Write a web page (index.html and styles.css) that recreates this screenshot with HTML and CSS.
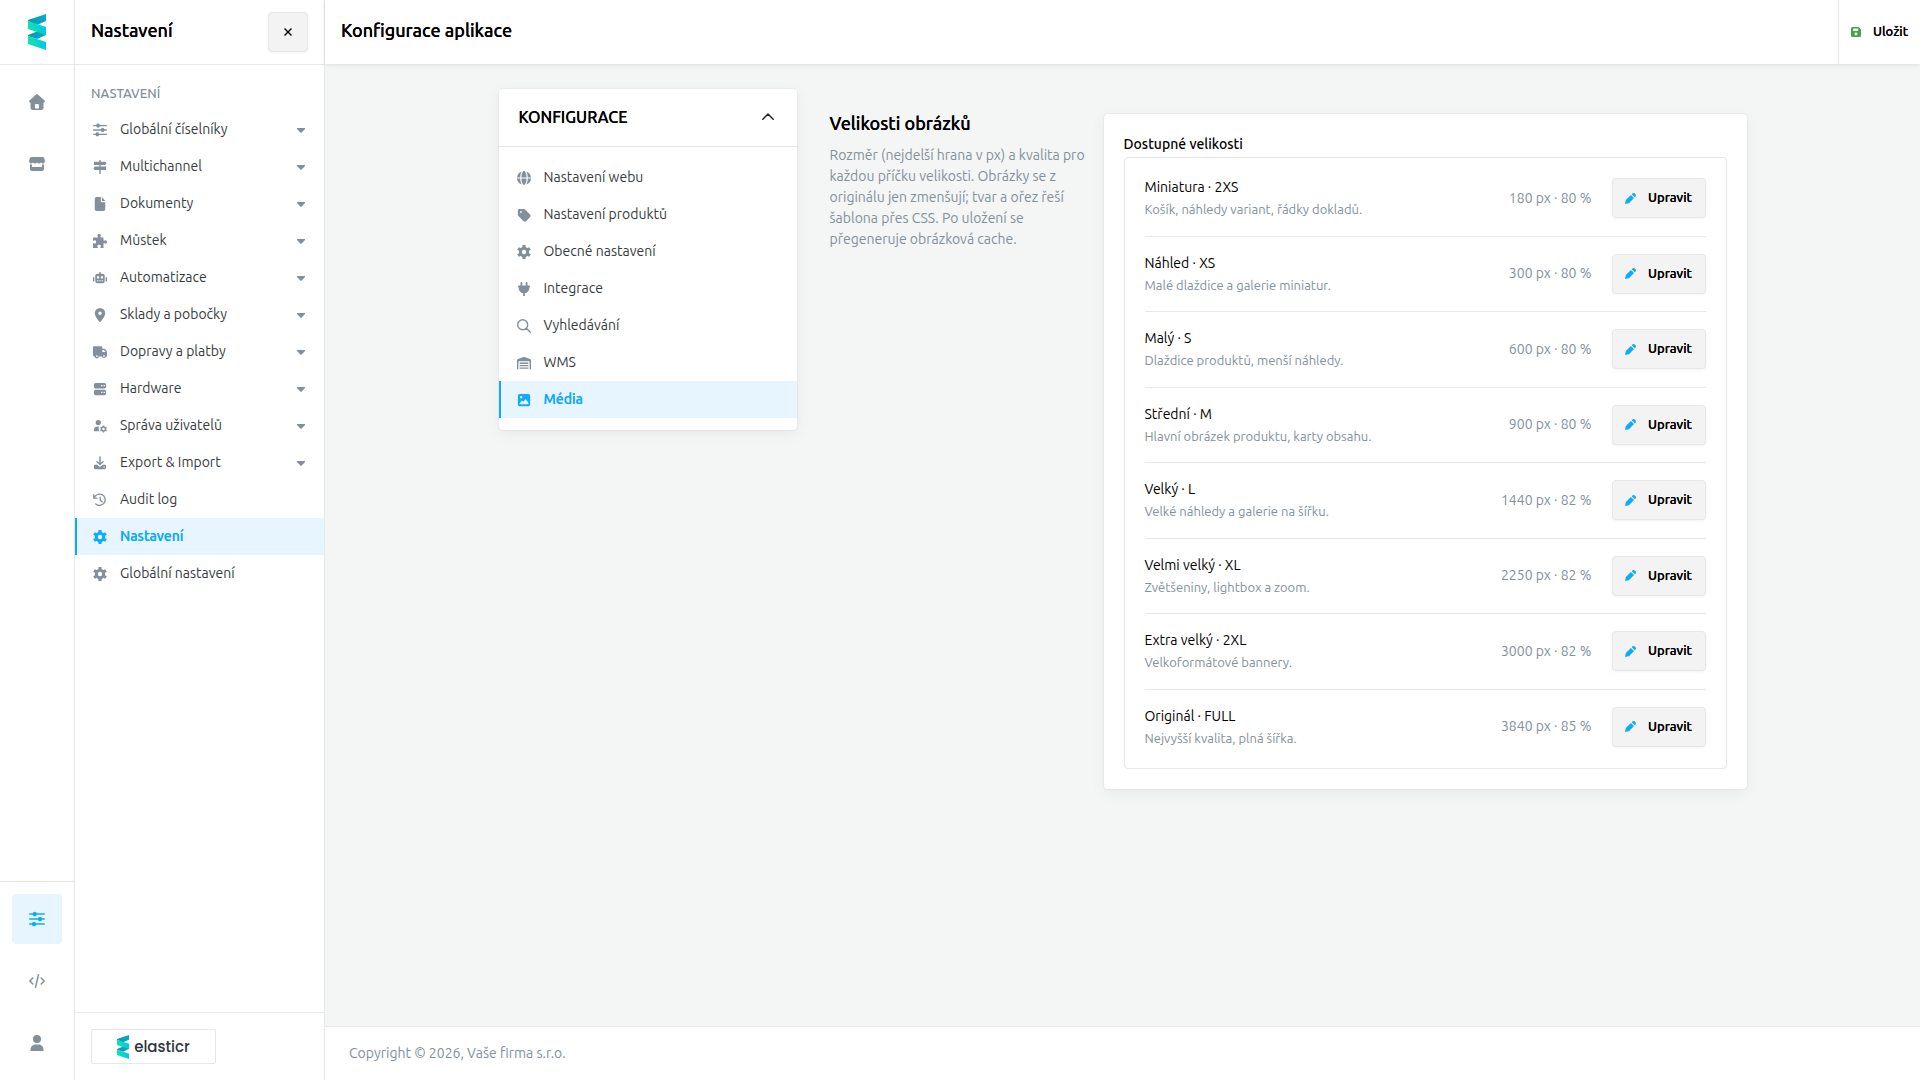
FILE: index.html
```html
<!DOCTYPE html>
<html lang="cs">
<head>
    <meta charset="UTF-8">
    <meta name="viewport" content="width=device-width, initial-scale=1.0">
    <title>Konfigurace aplikace</title>
    <link rel="stylesheet" href="styles.css">
</head>
<body>
    <!-- Sada ikon -->
    <svg class="sprite" aria-hidden="true">
        <defs>
            <linearGradient id="front" x1="0" x2="1" y1="0" y2="0">
                <stop offset="0" stop-color="#0fe3ae"/>
                <stop offset="1" stop-color="#00c8e6"/>
            </linearGradient>
            <linearGradient id="back" x1="0" x2="1" y1="0" y2="0">
                <stop offset="0" stop-color="#0697b5"/>
                <stop offset="1" stop-color="#08abc8"/>
            </linearGradient>
        </defs>
        <symbol id="i-logo" viewBox="0 0 18 36">
            <path fill="url(#back)" d="M0 6 18 0v7l-9 4-9-4z"/>
            <path fill="url(#back)" d="M0 21l18-7v7l-9 4-9-3z"/>
            <path fill="url(#front)" d="M0 7l18 6v8L0 15z"/>
            <path fill="url(#front)" d="M0 22l18 6v8L0 30z"/>
        </symbol>
        <symbol id="i-home" viewBox="0 0 16 16">
            <path fill-rule="evenodd" d="M7.2.4a1.2 1.2 0 0 1 1.6 0l6.8 6.1c.8.7.3 1.9-.7 1.9h-.4v5.4c0 1.2-.8 2.2-2.1 2.2H3.600c-1.300 0-2.100-1-2.100-2.200V8.400h-.4c-1 0-1.500-1.200-.7-1.900zM6.800 10c-.5 0-.8.3-.8.8V14.500h4v-3.700c0-.5-.3-.8-.8-.8z"/>
        </symbol>
        <symbol id="i-shop" viewBox="0 0 16 16">
            <path d="M2.500 1h11c.8 0 1.300.4 1.600 1.100l.8 2.600c.3 1.600-.6 2.700-1.800 2.700-.8 0-1.500-.4-2-1-.5.600-1.200 1-2 1S8.500 7 8 6.400C7.500 7 6.800 7.400 6 7.400s-1.600-.4-2.100-1c-.5.600-1.200 1-2 1C.7 7.400-.2 6.300.1 4.700l.8-2.600C1.200 1.400 1.700 1 2.500 1z"/>
            <path d="M1 8.500c.8.200 1.500.1 2 0V11h10V8.500c.6.200 1.300.2 2 0V13c0 1.200-.8 2-2 2H3c-1.200 0-2-.8-2-2z"/>
        </symbol>
        <symbol id="i-sliders" viewBox="0 0 16 16">
            <path d="M.8 2.200h2.900a2.200 2.200 0 0 1 4.200 0h7.300a.8.8 0 0 1 0 1.600H7.900a2.200 2.200 0 0 1-4.200 0H.8a.8.8 0 0 1 0-1.600zM.8 7.200h8.100a2.200 2.200 0 0 1 4.200 0h2.100a.8.8 0 0 1 0 1.600h-2.100a2.200 2.200 0 0 1-4.200 0H.8a.8.8 0 0 1 0-1.600zM.8 12.200h2.100a2.200 2.200 0 0 1 4.200 0h8.100a.8.8 0 0 1 0 1.600H7.100a2.200 2.200 0 0 1-4.200 0H.8a.8.8 0 0 1 0-1.600z"/>
        </symbol>
        <symbol id="i-code" viewBox="0 0 16 16">
            <path fill="none" stroke="currentColor" stroke-width="1.500" stroke-linecap="round" stroke-linejoin="round" d="M3.800 5 .9 8l2.900 3M12.200 5l2.900 3-2.900 3M9.500 1.700l-3 12.600"/>
        </symbol>
        <symbol id="i-user" viewBox="0 0 16 16">
            <circle cx="8" cy="4" r="4"/>
            <path d="M1.500 16v-1.500A5 5 0 0 1 6.500 9.500h3a5 5 0 0 1 5 5V16z"/>
        </symbol>
        <symbol id="i-signpost" viewBox="0 0 16 16">
            <path d="M7.200 0h1.600v2H14l1.500 1.800L14 5.700H8.800v1.800h6.200v4H8.800V16H7.200v-4.500H2L.4 9.500 2 7.500h5.200V5.700H1V2h6.200z"/>
        </symbol>
        <symbol id="i-file" viewBox="0 0 16 16">
            <path d="M4 0h5v4.500C9 5.300 9.600 6 10.500 6H14v8a2 2 0 0 1-2 2H4a2 2 0 0 1-2-2V2a2 2 0 0 1 2-2zM10.200 0 14 4.700h-3.200c-.4 0-.6-.2-.6-.6z"/>
        </symbol>
        <symbol id="i-puzzle" viewBox="0 0 16 16">
            <path d="M5 1.800C5 .8 5.900 0 7 0s2 .8 2 1.800c0 .9-.7 1.100-.7 1.700 0 .3.300.5.600.500H12v3.100c0 .3.200.6.500.6.600 0 .8-.7 1.700-.7 1 0 1.800.9 1.800 2s-.8 2-1.800 2c-.9 0-1.100-.7-1.700-.7-.3 0-.5.300-.5.600V16H8.900c-.3 0-.6-.2-.6-.5 0-.6.700-.8.700-1.600 0-.9-.9-1.500-2-1.500s-2 .6-2 1.500c0 .8.700 1 .7 1.600 0 .3-.3.5-.6.5H0v-5c0-.3.200-.6.500-.6.600 0 .8.700 1.600.7.900 0 1.500-.9 1.500-2s-.6-2-1.500-2c-.8 0-1 .7-1.600.7C.2 7.800 0 7.500 0 7.200V4h5.100c.3 0 .6-.2.6-.5C5.700 2.900 5 2.700 5 1.800z"/>
        </symbol>
        <symbol id="i-robot" viewBox="0 0 16 16">
            <path fill-rule="evenodd" d="M7.200 1h1.600v2H11a2.400 2.400 0 0 1 2.400 2.400v6.200A2.400 2.400 0 0 1 11 14H5a2.400 2.400 0 0 1-2.400-2.400V5.400A2.400 2.400 0 0 1 5 3h2.200zM4.500 6v2.500H7V6zM9 6v2.500h2.500V6zM4.500 10.500v1.300h1.500v-1.300zm2.700 0v1.300h1.600v-1.300zm2.800 0v1.300h1.500v-1.300zM0 7h1.500v5H0zM14.500 7H16v5h-1.500z"/>
        </symbol>
        <symbol id="i-pin" viewBox="0 0 16 16">
            <path fill-rule="evenodd" d="M8 0a6 6 0 0 1 6 6c0 3.200-3.800 7.900-5.300 9.700a.9.900 0 0 1-1.400 0C5.800 13.900 2 9.200 2 6a6 6 0 0 1 6-6zm0 4a2 2 0 1 0 0 4 2 2 0 0 0 0-4z"/>
        </symbol>
        <symbol id="i-truck" viewBox="0 0 16 16">
            <path fill-rule="evenodd" d="M1.500 1.500h7.700c.8 0 1.400.6 1.400 1.500v1.200h2.100c.4 0 .8.200 1.100.5l1.700 1.900c.3.300.5.700.5 1.100V13h-1.200a2.300 2.300 0 0 1-4.500 0H6.600A2.300 2.300 0 0 1 2 13h-.5C.6 13 0 12.400 0 11.500V3c0-.9.6-1.500 1.500-1.500zm9.100 4.200v2.300h4l-2-2.300zM4.300 11.600a1 1 0 1 0 0 2 1 1 0 0 0 0-2zm8.200 0a1 1 0 1 0 0 2 1 1 0 0 0 0-2z"/>
        </symbol>
        <symbol id="i-server" viewBox="0 0 16 16">
            <path fill-rule="evenodd" d="M3 1h10a2 2 0 0 1 2 2v2.300a2 2 0 0 1-2 2H3a2 2 0 0 1-2-2V3a2 2 0 0 1 2-2zm6.300 2.300v1.500h1.500V3.300zm2.800 0v1.500h1.500V3.300zM3 8.800h10a2 2 0 0 1 2 2V13a2 2 0 0 1-2 2H3a2 2 0 0 1-2-2v-2.200a2 2 0 0 1 2-2zm6.300 2.400v1.500h1.500v-1.500zm2.800 0v1.500h1.500v-1.500z"/>
        </symbol>
        <symbol id="i-usercog" viewBox="0 0 16 16">
            <circle cx="6" cy="4" r="3"/>
            <path d="M1 14v-1a4.500 4.500 0 0 1 4.500-4.500h1.200c-.6 2-.3 4 .8 5.500z"/>
            <circle cx="12" cy="11.500" r="2.300" fill="none" stroke="currentColor" stroke-width="1.800"/>
            <path fill="none" stroke="currentColor" stroke-width="1.500" d="M12 7.500v1.600M12 13.900v1.600M8.500 9.500l1.400.8M14.100 12.700l1.400.8M8.500 13.500l1.400-.8M14.100 10.300l1.400-.8"/>
        </symbol>
        <symbol id="i-download" viewBox="0 0 16 16">
            <path fill="none" stroke="currentColor" stroke-width="1.700" stroke-linecap="round" stroke-linejoin="round" d="M8 1v8.500M4.600 6.500 8 9.700l3.400-3.200"/>
            <path fill-rule="evenodd" d="M2.500 10h2.300L8 12.500 11.200 10h2.300c.9 0 1.500.6 1.500 1.500v2c0 .9-.6 1.500-1.500 1.500h-11c-.9 0-1.500-.6-1.500-1.500v-2c0-.9.6-1.500 1.500-1.500zm9.500 2v1.300h1.300V12z"/>
        </symbol>
        <symbol id="i-history" viewBox="0 0 16 16">
            <path fill="none" stroke="currentColor" stroke-width="1.500" stroke-linecap="round" stroke-linejoin="round" d="M.9 2v3.800h3.800M1.300 5.600a6.500 6.500 0 1 1 1.800 7M8.200 4.800V8l2.300 2.200"/>
        </symbol>
        <symbol id="i-gear" viewBox="0 0 16 16">
            <circle cx="8" cy="8" r="4.200" fill="none" stroke="currentColor" stroke-width="3.400"/>
            <path fill="none" stroke="currentColor" stroke-width="3.600" d="M8 0v4M8 16v-4M1.100 4l3 1.700M14.900 4l-3 1.700M1.100 12l3-1.700M14.900 12l-3-1.700"/>
        </symbol>
        <symbol id="i-globe" viewBox="0 0 16 16">
            <path d="M8 0c1.500 0 2.800 3 2.900 7.300H5.100C5.200 3 6.500 0 8 0zM5.100 8.700h5.800C10.800 13 9.500 16 8 16s-2.800-3-2.900-7.300zM5.300.5C4.400 2 3.800 4.500 3.700 7.300H0A8 8 0 0 1 5.300.5zM10.700.5A8 8 0 0 1 16 7.300h-3.700C12.200 4.500 11.600 2 10.700.5zM0 8.700h3.700c.1 2.800.7 5.300 1.600 6.800A8 8 0 0 1 0 8.700zM12.300 8.700H16a8 8 0 0 1-5.300 6.800c.9-1.500 1.500-4 1.600-6.800z"/>
        </symbol>
        <symbol id="i-tag" viewBox="0 0 16 16">
            <path fill-rule="evenodd" d="M1 2.500C1 1.700 1.700 1 2.500 1h5.200c.6 0 1.100.2 1.500.6l5.800 5.900c.7.8.7 2 0 2.800L10.300 15c-.8.700-2 .7-2.800 0L1.600 9.200A2 2 0 0 1 1 7.700zm3.500 1a1 1 0 1 0 0 2 1 1 0 0 0 0-2z"/>
        </symbol>
        <symbol id="i-plug" viewBox="0 0 16 16">
            <path d="M5 0c.6 0 1 .4 1 1v3h4V1a1 1 0 0 1 2 0v3h2a1 1 0 0 1 0 2v1.500c0 2.700-2.200 4.900-5 5.400V16H7v-3.100c-2.800-.5-5-2.700-5-5.400V6a1 1 0 0 1 0-2h2V1c0-.6.4-1 1-1z"/>
        </symbol>
        <symbol id="i-search" viewBox="0 0 16 16">
            <path fill="none" stroke="currentColor" stroke-width="1.600" stroke-linecap="round" d="M10.700 10.700l4.500 4.500M12.200 6.500a5.700 5.700 0 1 1-11.400 0 5.700 5.700 0 0 1 11.400 0z"/>
        </symbol>
        <symbol id="i-warehouse" viewBox="0 0 16 16">
            <path d="M0 5c0-.7.4-1.200 1-1.500L7.400 1.200a2 2 0 0 1 1.200 0L15 3.500c.6.300 1 .8 1 1.500v10h-1.600V7c0-.6-.4-1-1-1H2.600c-.6 0-1 .4-1 1v8H0zM3 7.500h10V9H3zM3 10.200h10v1.500H3zM3 13h10v1.500H3z"/>
        </symbol>
        <symbol id="i-image" viewBox="0 0 16 16">
            <path fill-rule="evenodd" d="M3 1h10a2 2 0 0 1 2 2v10a2 2 0 0 1-2 2H3a2 2 0 0 1-2-2V3a2 2 0 0 1 2-2zm1.800 2.400a1.400 1.400 0 1 0 0 2.800 1.400 1.400 0 0 0 0-2.800zM3 12.800h10V11L9.900 6.800 7.300 10 5.700 8.600 3 11.600z"/>
        </symbol>
        <symbol id="i-pencil" viewBox="0 0 16 16">
            <path d="M8.600 2.900l4.500 4.500-6.600 6.600c-.5.5-.9.700-1.400.9L0 16l1.100-5c.2-.6.4-1 .9-1.400zM9.800 1.700l.8-.8a2.800 2.800 0 0 1 3.800 0l.7.700a2.800 2.800 0 0 1 0 3.800l-.8.8z"/>
        </symbol>
        <symbol id="i-save" viewBox="0 0 16 16">
            <path fill-rule="evenodd" d="M2.500 0h9c.6 0 1 .2 1.400.6l2.500 2.500c.4.400.6.900.6 1.400v9a2.500 2.500 0 0 1-2.500 2.500h-11A2.500 2.500 0 0 1 0 13.500v-11A2.500 2.500 0 0 1 2.500 0zM3.500 2.500v4h8v-4zM8 8.800a2.300 2.300 0 1 0 0 4.600 2.300 2.300 0 0 0 0-4.600z"/>
        </symbol>
        <symbol id="i-caret" viewBox="0 0 8 5">
            <path d="M0 0h8v1L4.700 4.600a1 1 0 0 1-1.400 0L0 1z"/>
        </symbol>
        <symbol id="i-chevron" viewBox="0 0 12 7">
            <path fill="none" stroke="currentColor" stroke-width="1.500" stroke-linecap="round" stroke-linejoin="round" d="M.8 6.200 6 1l5.200 5.200"/>
        </symbol>
        <symbol id="i-close" viewBox="0 0 8 8">
            <path fill="none" stroke="currentColor" stroke-width="1.400" d="M.5.500l7 7M7.500.500l-7 7"/>
        </symbol>
    </svg>

    <div class="app">
        <nav class="rail" aria-label="Moduly">
            <a href="#" class="rail-logo" aria-label="elasticr"><svg><use href="#i-logo"/></svg></a>
            <div class="rail-group">
                <a href="#" class="rail-link" aria-label="Domů"><svg><use href="#i-home"/></svg></a>
                <a href="#" class="rail-link" aria-label="Obchod"><svg><use href="#i-shop"/></svg></a>
            </div>
            <div class="rail-group rail-bottom">
                <a href="#" class="rail-link active" aria-label="Nastavení"><svg><use href="#i-sliders"/></svg></a>
                <a href="#" class="rail-link" aria-label="Vývojář"><svg><use href="#i-code"/></svg></a>
                <a href="#" class="rail-link" aria-label="Uživatel"><svg><use href="#i-user"/></svg></a>
            </div>
        </nav>

        <aside class="panel">
            <header class="panel-header">
                <h2>Nastavení</h2>
                <button type="button" class="btn btn-square" aria-label="Zavřít"><svg><use href="#i-close"/></svg></button>
            </header>
            <div class="panel-body">
                <h3 class="menu-label">NASTAVENÍ</h3>
                <ul class="menu">
                    <li><a href="#"><svg><use href="#i-sliders"/></svg><span>Globální číselníky</span><svg class="caret"><use href="#i-caret"/></svg></a></li>
                    <li><a href="#"><svg><use href="#i-signpost"/></svg><span>Multichannel</span><svg class="caret"><use href="#i-caret"/></svg></a></li>
                    <li><a href="#"><svg><use href="#i-file"/></svg><span>Dokumenty</span><svg class="caret"><use href="#i-caret"/></svg></a></li>
                    <li><a href="#"><svg><use href="#i-puzzle"/></svg><span>Můstek</span><svg class="caret"><use href="#i-caret"/></svg></a></li>
                    <li><a href="#"><svg><use href="#i-robot"/></svg><span>Automatizace</span><svg class="caret"><use href="#i-caret"/></svg></a></li>
                    <li><a href="#"><svg><use href="#i-pin"/></svg><span>Sklady a pobočky</span><svg class="caret"><use href="#i-caret"/></svg></a></li>
                    <li><a href="#"><svg><use href="#i-truck"/></svg><span>Dopravy a platby</span><svg class="caret"><use href="#i-caret"/></svg></a></li>
                    <li><a href="#"><svg><use href="#i-server"/></svg><span>Hardware</span><svg class="caret"><use href="#i-caret"/></svg></a></li>
                    <li><a href="#"><svg><use href="#i-usercog"/></svg><span>Správa uživatelů</span><svg class="caret"><use href="#i-caret"/></svg></a></li>
                    <li><a href="#"><svg><use href="#i-download"/></svg><span>Export &amp; Import</span><svg class="caret"><use href="#i-caret"/></svg></a></li>
                    <li><a href="#"><svg><use href="#i-history"/></svg><span>Audit log</span></a></li>
                    <li><a href="#" class="active"><svg><use href="#i-gear"/></svg><span>Nastavení</span></a></li>
                    <li><a href="#"><svg><use href="#i-gear"/></svg><span>Globální nastavení</span></a></li>
                </ul>
            </div>
            <footer class="panel-footer">
                <a href="#" class="brand"><svg><use href="#i-logo"/></svg><span>elasticr</span></a>
            </footer>
        </aside>

        <div class="main">
            <header class="topbar">
                <h1>Konfigurace aplikace</h1>
                <button type="button" class="save"><svg><use href="#i-save"/></svg><span>Uložit</span></button>
            </header>

            <main class="content">
                <div class="layout">
                    <section class="card config">
                        <header class="config-header">
                            <h2>KONFIGURACE</h2>
                            <button type="button" class="toggle" aria-label="Sbalit"><svg><use href="#i-chevron"/></svg></button>
                        </header>
                        <ul class="menu">
                            <li><a href="#"><svg><use href="#i-globe"/></svg><span>Nastavení webu</span></a></li>
                            <li><a href="#"><svg><use href="#i-tag"/></svg><span>Nastavení produktů</span></a></li>
                            <li><a href="#"><svg><use href="#i-gear"/></svg><span>Obecné nastavení</span></a></li>
                            <li><a href="#"><svg><use href="#i-plug"/></svg><span>Integrace</span></a></li>
                            <li><a href="#"><svg><use href="#i-search"/></svg><span>Vyhledávání</span></a></li>
                            <li><a href="#"><svg><use href="#i-warehouse"/></svg><span>WMS</span></a></li>
                            <li><a href="#" class="active"><svg><use href="#i-image"/></svg><span>Média</span></a></li>
                        </ul>
                    </section>

                    <section class="settings">
                        <div class="intro">
                            <h2>Velikosti obrázků</h2>
                            <p>Rozměr (nejdelší hrana v px) a kvalita pro každou příčku velikosti. Obrázky se z originálu jen zmenšují; tvar a ořez řeší šablona přes CSS. Po uložení se přegeneruje obrázková cache.</p>
                        </div>
                        <div class="card sizes">
                            <h3>Dostupné velikosti</h3>
                            <ul class="size-list">
                                <li>
                                    <div class="size-text"><strong>Miniatura · 2XS</strong><small>Košík, náhledy variant, řádky dokladů.</small></div>
                                    <span class="size-value">180 px · 80 %</span>
                                    <button type="button" class="btn"><svg><use href="#i-pencil"/></svg><span>Upravit</span></button>
                                </li>
                                <li>
                                    <div class="size-text"><strong>Náhled · XS</strong><small>Malé dlaždice a galerie miniatur.</small></div>
                                    <span class="size-value">300 px · 80 %</span>
                                    <button type="button" class="btn"><svg><use href="#i-pencil"/></svg><span>Upravit</span></button>
                                </li>
                                <li>
                                    <div class="size-text"><strong>Malý · S</strong><small>Dlaždice produktů, menší náhledy.</small></div>
                                    <span class="size-value">600 px · 80 %</span>
                                    <button type="button" class="btn"><svg><use href="#i-pencil"/></svg><span>Upravit</span></button>
                                </li>
                                <li>
                                    <div class="size-text"><strong>Střední · M</strong><small>Hlavní obrázek produktu, karty obsahu.</small></div>
                                    <span class="size-value">900 px · 80 %</span>
                                    <button type="button" class="btn"><svg><use href="#i-pencil"/></svg><span>Upravit</span></button>
                                </li>
                                <li>
                                    <div class="size-text"><strong>Velký · L</strong><small>Velké náhledy a galerie na šířku.</small></div>
                                    <span class="size-value">1440 px · 82 %</span>
                                    <button type="button" class="btn"><svg><use href="#i-pencil"/></svg><span>Upravit</span></button>
                                </li>
                                <li>
                                    <div class="size-text"><strong>Velmi velký · XL</strong><small>Zvětšeniny, lightbox a zoom.</small></div>
                                    <span class="size-value">2250 px · 82 %</span>
                                    <button type="button" class="btn"><svg><use href="#i-pencil"/></svg><span>Upravit</span></button>
                                </li>
                                <li>
                                    <div class="size-text"><strong>Extra velký · 2XL</strong><small>Velkoformátové bannery.</small></div>
                                    <span class="size-value">3000 px · 82 %</span>
                                    <button type="button" class="btn"><svg><use href="#i-pencil"/></svg><span>Upravit</span></button>
                                </li>
                                <li>
                                    <div class="size-text"><strong>Originál · FULL</strong><small>Nejvyšší kvalita, plná šířka.</small></div>
                                    <span class="size-value">3840 px · 85 %</span>
                                    <button type="button" class="btn"><svg><use href="#i-pencil"/></svg><span>Upravit</span></button>
                                </li>
                            </ul>
                        </div>
                    </section>
                </div>
            </main>

            <footer class="footer">Copyright © 2026, Vaše firma s.r.o.</footer>
        </div>
    </div>
</body>
</html>
```

FILE: styles.css
```css
:root {
    --blue: #0eacf5;
    --blue-light: #e6f5ff;
    --gray: #83909b;
    --border: #e6e7e9;
    --text: #363b40;
}

* {
    box-sizing: border-box;
}

body {
    margin: 0;
    font-family: Ubuntu, "Noto Sans", sans-serif;
    font-size: 14px;
    line-height: 1.5;
    color: #000;
    background: #f4f5f5;
}

h1, h2, h3, p, ul {
    margin: 0;
    padding: 0;
}

h1, h2, .btn, .save, .menu .active {
    font-weight: 500;
    text-shadow: 0 0 0 currentColor;
}

ul {
    list-style: none;
}

a {
    color: inherit;
    text-decoration: none;
}

button {
    font-family: inherit;
    color: inherit;
    cursor: pointer;
}

svg {
    display: block;
    flex: none;
    fill: currentColor;
}

.sprite {
    position: absolute;
    width: 0;
    height: 0;
}

.app {
    display: flex;
    min-height: 100vh;
}

/* Levá lišta */
.rail {
    display: flex;
    flex-direction: column;
    width: 75px;
    background: #fff;
    border-right: 1px solid var(--border);
}

.rail-logo {
    display: flex;
    align-items: center;
    justify-content: center;
    height: 65px;
    border-bottom: 1px solid var(--border);
}

.rail-logo svg {
    width: 18px;
    height: 36px;
}

.rail-group {
    display: flex;
    flex-direction: column;
    gap: 12px;
    padding: 12px;
}

.rail-bottom {
    margin-top: auto;
    border-top: 1px solid var(--border);
}

.rail-link {
    display: flex;
    align-items: center;
    justify-content: center;
    height: 50px;
    border-radius: 4px;
    color: var(--gray);
}

.rail-link svg {
    width: 16px;
    height: 16px;
}

.rail-link.active {
    color: var(--blue);
    background: var(--blue-light);
}

/* Panel s nabídkou */
.panel {
    display: flex;
    flex-direction: column;
    width: 250px;
    background: #fff;
    border-right: 1px solid var(--border);
}

.panel-header {
    display: flex;
    align-items: center;
    justify-content: space-between;
    height: 65px;
    padding: 0 16px;
    border-bottom: 1px solid var(--border);
}

.panel-header h2,
.topbar h1,
.intro h2 {
    font-size: 18px;
    line-height: 18px;
}

.panel-header h2,
.topbar h1 {
    padding-bottom: 4px;
}

.panel-body {
    flex: 1;
}

.menu-label {
    padding: 18px 16px 7px;
    font-size: 13px;
    line-height: 21px;
    font-weight: 500;
    color: var(--gray);
}

.menu a {
    display: flex;
    align-items: center;
    gap: 13px;
    height: 37px;
    padding: 0 19px 0 16px;
    border-left: 2px solid transparent;
    color: var(--text);
}

.menu span {
    padding-bottom: 1px;
}

.menu svg {
    width: 14px;
    height: 14px;
    margin-top: 1px;
    color: var(--gray);
}

.menu .caret {
    width: 8px;
    height: 5px;
    margin-top: 2px;
    margin-left: auto;
}

.menu .active {
    border-left-color: var(--blue);
    background: var(--blue-light);
    color: var(--blue);
}

.menu .active svg {
    color: var(--blue);
}

.panel-footer {
    padding: 16px;
    border-top: 1px solid var(--border);
}

.brand {
    display: flex;
    align-items: center;
    justify-content: center;
    gap: 5px;
    width: 125px;
    height: 35px;
    border: 1px solid var(--border);
    border-radius: 2px;
    font-family: Poppins, Inter, sans-serif;
    font-size: 15px;
    line-height: 21px;
    font-weight: 500;
    color: #2f3640;
}

.brand svg {
    width: 12px;
    height: 24px;
}

/* Hlavní část */
.main {
    display: flex;
    flex: 1;
    flex-direction: column;
}

.topbar {
    display: flex;
    align-items: center;
    justify-content: space-between;
    height: 64px;
    padding-left: 16px;
    background: #fff;
    box-shadow: 0 1px 4px rgba(0, 0, 0, 0.1);
}

.save {
    display: flex;
    align-items: center;
    align-self: stretch;
    gap: 12px;
    padding: 0 12px;
    border: 0;
    border-left: 1px solid var(--border);
    background: none;
    font-size: 13px;
}

.save svg {
    width: 10px;
    height: 10px;
    color: #43a547;
}

.save span,
.btn span {
    padding-bottom: 2px;
}

.content {
    flex: 1;
    padding: 25px 24px;
}

.layout {
    display: grid;
    grid-template-columns: 298px 1fr;
    align-items: start;
    gap: 33px;
    max-width: 1248px;
    margin: 0 auto;
}

.card {
    background: #fff;
    border-radius: 4px;
    box-shadow: 0 0 2px rgba(0, 0, 0, 0.12), 0 4px 16px rgba(0, 0, 0, 0.05);
}

.config-header {
    display: flex;
    align-items: center;
    justify-content: space-between;
    height: 58px;
    padding: 0 15px 2px 20px;
    border-bottom: 1px solid var(--border);
}

.config-header h2 {
    font-size: 16px;
}

.toggle {
    padding: 8px;
    border: 0;
    background: none;
    color: #222;
}

.toggle svg {
    width: 12px;
    height: 7px;
}

.config .menu {
    padding: 12px 0;
}

.settings {
    display: grid;
    grid-template-columns: 258px 1fr;
    align-items: start;
    gap: 16px;
    padding-top: 25px;
}

.intro p {
    margin-top: 13px;
    color: var(--gray);
}

.sizes {
    padding: 20px;
}

.sizes h3 {
    margin-bottom: 2px;
    font-size: 14px;
    font-weight: 500;
}

.size-list {
    padding: 19px 20px 20px;
    border: 1px solid var(--border);
    border-radius: 4px;
}

.size-list li {
    display: flex;
    align-items: center;
    gap: 20px;
    padding: 16px 0;
    border-bottom: 1px solid var(--border);
}

.size-list li:first-child {
    padding-top: 0;
}

.size-list li:last-child {
    padding-bottom: 0;
    border-bottom: 0;
}

.size-text {
    flex: 1;
}

.size-text strong,
.size-text small {
    display: block;
    font-weight: 400;
}

.size-text strong {
    margin-bottom: 2px;
}

.size-text small {
    font-size: 13px;
    color: var(--gray);
}

.size-value {
    color: var(--gray);
}

.btn {
    display: flex;
    align-items: center;
    justify-content: center;
    gap: 12px;
    width: 94px;
    height: 40px;
    padding: 0;
    border: 1px solid var(--border);
    border-radius: 4px;
    background: #f3f3f3;
    box-shadow: 0 1px 3px rgba(0, 0, 0, 0.05);
    font-size: 13px;
}

.btn svg {
    width: 11px;
    height: 11px;
    color: var(--blue);
}

.btn-square {
    width: 40px;
}

.btn-square svg {
    width: 8px;
    height: 8px;
    color: #000;
}

.footer {
    padding: 16px 24px;
    border-top: 1px solid var(--border);
    background: #fff;
    color: var(--gray);
}
```
